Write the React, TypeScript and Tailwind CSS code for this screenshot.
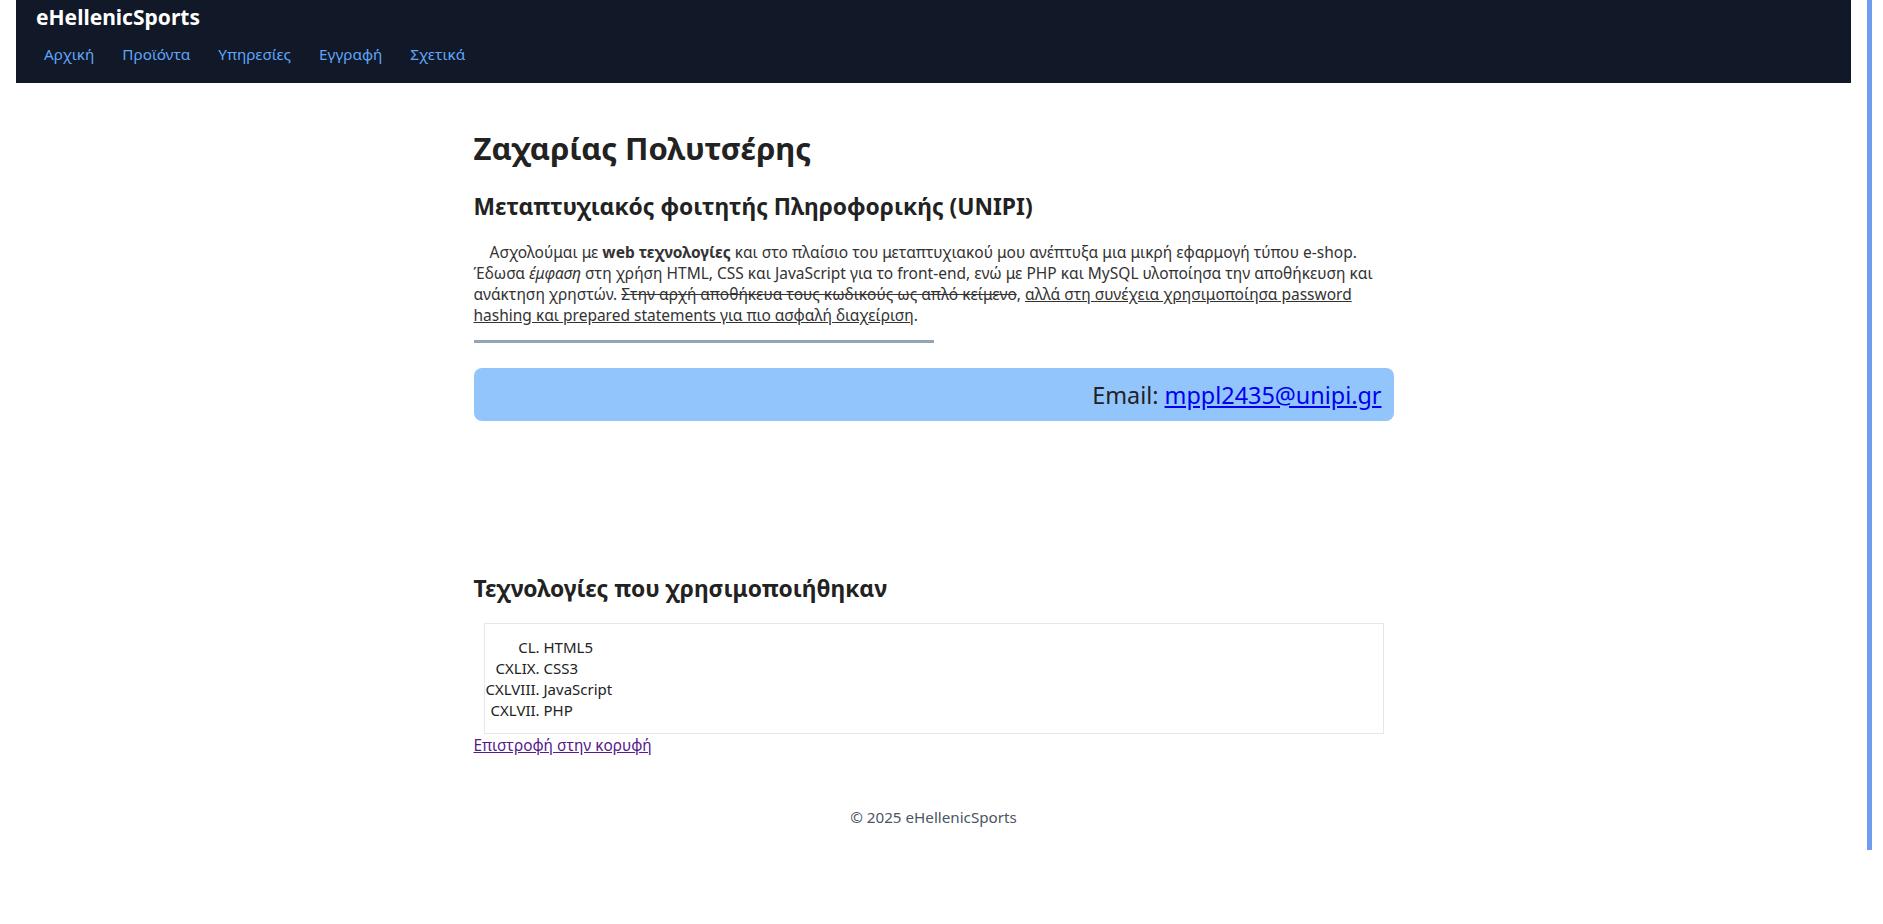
import React from 'react';

const navLinks = ['Αρχική', 'Προϊόντα', 'Υπηρεσίες', 'Εγγραφή', 'Σχετικά'];
const techs = ['HTML5', 'CSS3', 'JavaScript', 'PHP'];

export default function App() {
  return (
    <div className="flex bg-white text-[#222] font-['Noto_Sans','Open_Sans',sans-serif]">
      <div className="flex-1 pl-4 min-h-[850px]">
        <header className="bg-[#111827] h-[83px] pl-5 pt-[2px]">
          <div className="text-white font-bold text-[21px] leading-[30px]">eHellenicSports</div>
          <nav className="flex gap-3 mt-[11px]">
            {navLinks.map((l) => (
              <a key={l} href="#" className="px-2 text-[15.3px] leading-[22px] text-[#60a5fa]">
                {l}
              </a>
            ))}
          </nav>
        </header>

        <main className="max-w-[920px] mx-auto">
          <h1 className="text-[31px] font-bold leading-[36px] mt-[47px]">Ζαχαρίας Πολυτσέρης</h1>
          <h2 className="text-[22.8px] font-bold leading-[28px] mt-[27px]">
            Μεταπτυχιακός φοιτητής Πληροφορικής (UNIPI)
          </h2>
          <p className="text-[15.5px] leading-[21px] text-[#333] indent-4 mt-[21px]">
            Ασχολούμαι με <strong>web τεχνολογίες</strong> και στο πλαίσιο του μεταπτυχιακού μου ανέπτυξα μια μικρή
            εφαρμογή τύπου e-shop. Έδωσα <em>έμφαση</em> στη χρήση HTML, CSS και JavaScript για το front-end, ενώ με
            PHP και MySQL υλοποίησα την αποθήκευση και ανάκτηση χρηστών.{' '}
            <s>Στην αρχή αποθήκευα τους κωδικούς ως απλό κείμενο</s>,{' '}
            <u>αλλά στη συνέχεια χρησιμοποίησα password hashing και prepared statements για πιο ασφαλή διαχείριση</u>.
          </p>
          <hr className="w-1/2 border-0 h-[3px] bg-[#94a3b8] mt-[14px]" />

          <div className="mt-[25px] h-[53px] rounded-lg bg-[#93c5fd] flex items-center justify-end pr-3">
            <span className="text-[23.4px] leading-[32px]">
              Email:{' '}
              <a href="mailto:mppl2435@unipi.gr" className="text-[#0000ee] underline">
                mppl2435@unipi.gr
              </a>
            </span>
          </div>

          <h2 className="text-[22.8px] font-bold leading-[28px] mt-[154px]">Τεχνολογίες που χρησιμοποιήθηκαν</h2>
          <div className="mx-[10px] mt-[20px] border border-[#e5e7eb] pt-[13px] pb-[12px]">
            <ol reversed start={150} className="list-[upper-roman] pl-[59px] text-[15px] leading-[21px]">
              {techs.map((t) => (
                <li key={t}>{t}</li>
              ))}
            </ol>
          </div>
          <a href="#" className="block w-fit mt-[1px] text-[15.4px] leading-[21px] text-[#551a8b] underline">
            Επιστροφή στην κορυφή
          </a>
        </main>

        <footer className="text-center text-[15.2px] leading-[21px] text-[#4b5563] mt-[51px]">
          © 2025 eHellenicSports
        </footer>
      </div>
      <div className="ml-4 mr-[11px] w-[5px] h-[850px] bg-[#6d9cf0]" />
    </div>
  );
}
